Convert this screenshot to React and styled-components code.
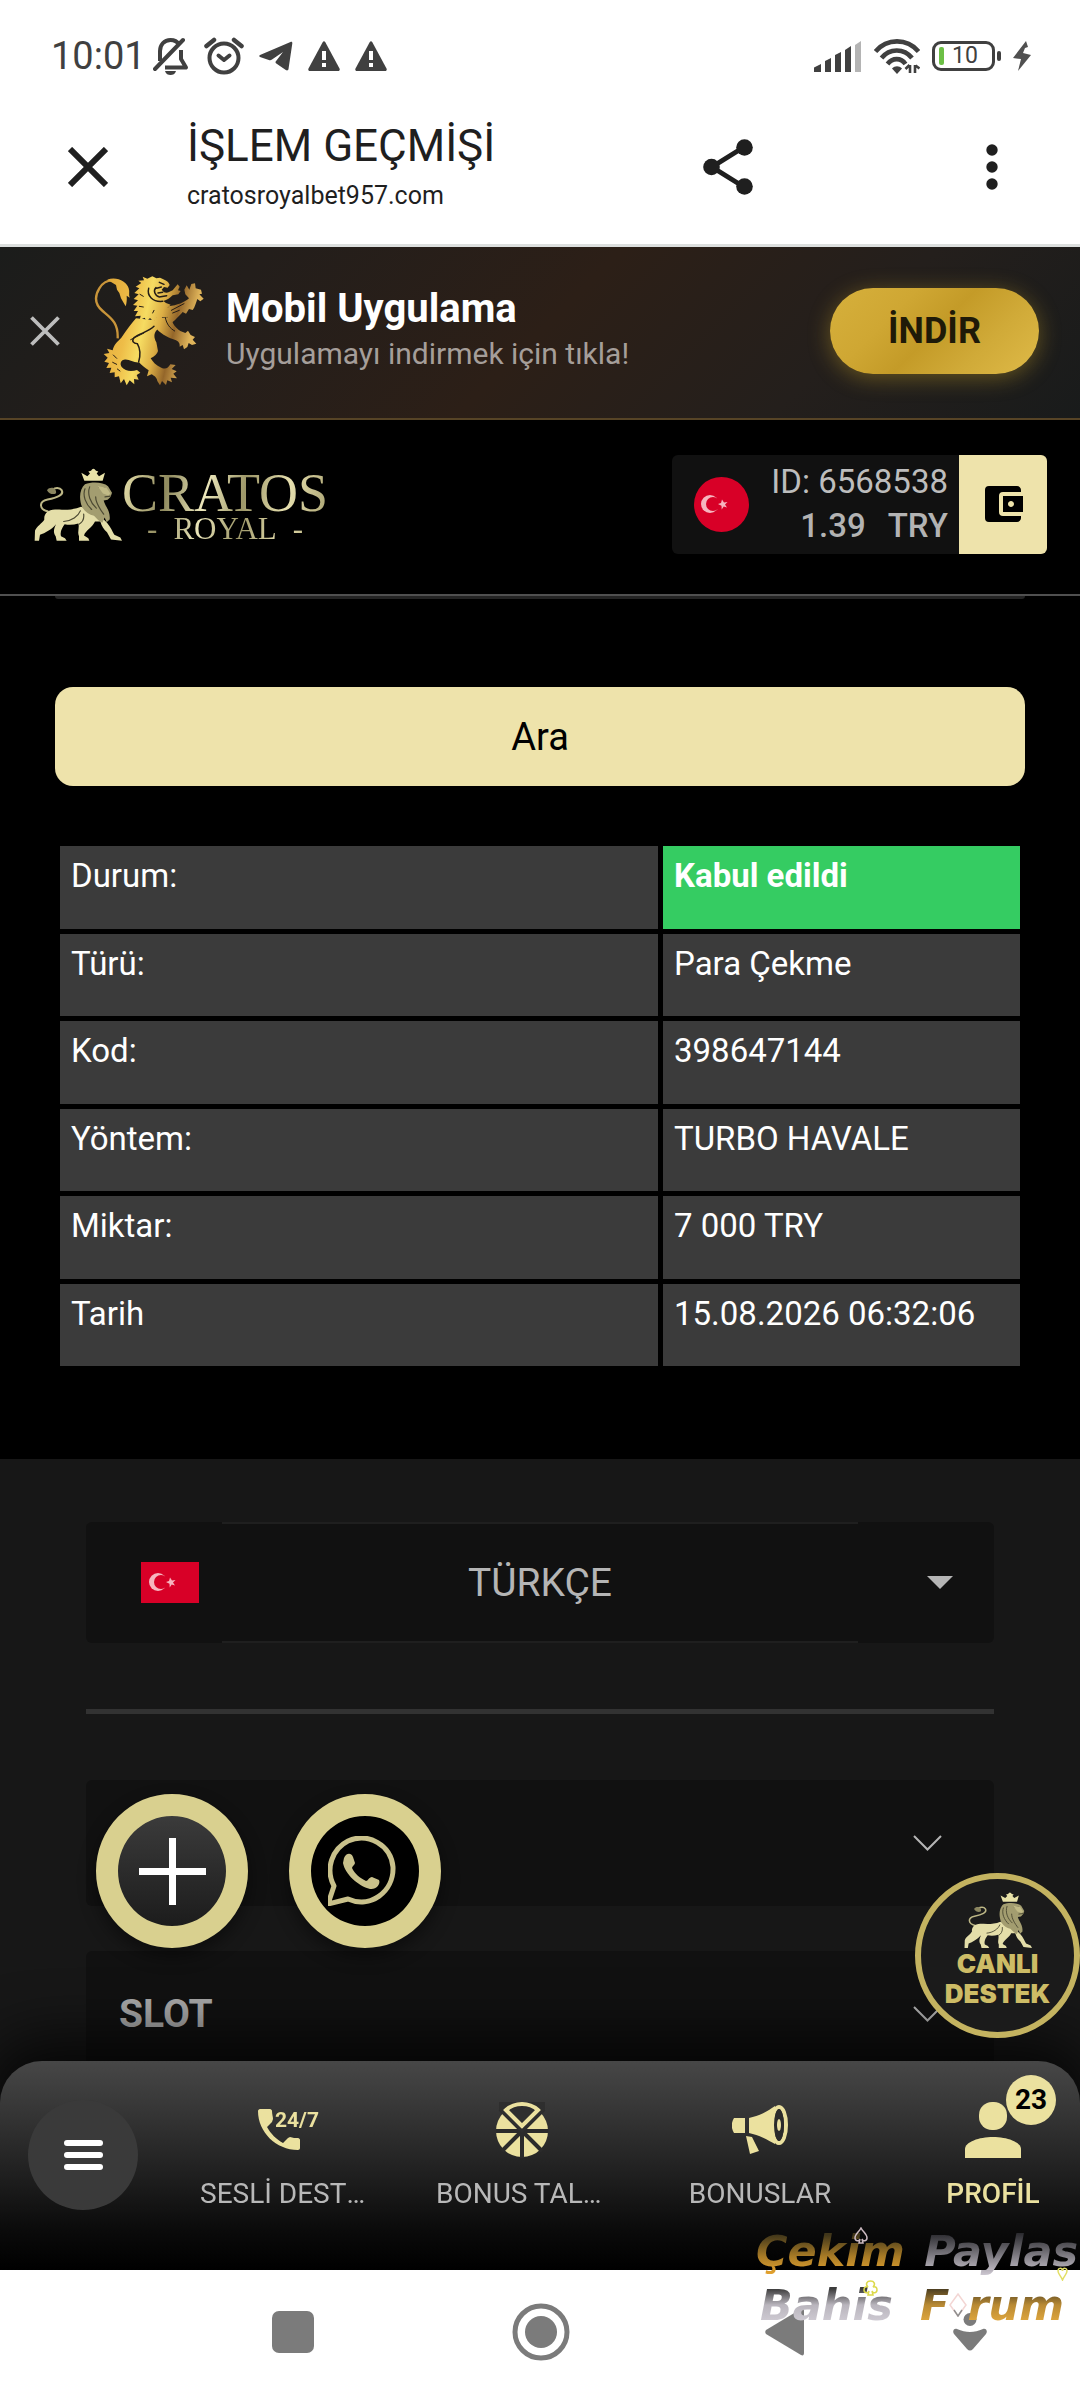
import React from "react";
import styled, { createGlobalStyle } from "styled-components";
import { MdAccountBalanceWallet } from "react-icons/md";

const GlobalStyle = createGlobalStyle`
  *, *::before, *::after { box-sizing: border-box; }
  body { margin: 0; background: #171717; font-family: Roboto, "Noto Sans", sans-serif; }
  button, select { font-family: inherit; margin: 0; padding: 0; border: 0; background: none; color: inherit; cursor: pointer; }
  svg { display: block; flex: none; }
`;

const Page = styled.div`
  display: flex;
  flex-direction: column;
  min-height: 100vh;
  background: #000;
`;

/* ---------- phone status bar ---------- */
const StatusBar = styled.div`
  display: flex;
  justify-content: space-between;
  align-items: center;
  height: 112px;
  padding: 0 49px 0 51px;
  background: #fff;
  color: #404040;
`;
const StatusGroup = styled.div`
  display: flex;
  align-items: center;
  gap: ${(p) => p.$gap}px;
`;
const Clock = styled.time`
  font-size: 38px;
  line-height: 44px;
  margin-right: -8px;
`;
const Battery = styled.div`
  display: flex;
  align-items: center;
  gap: 2px;
`;
const BatteryShell = styled.div`
  display: flex;
  align-items: center;
  gap: 8px;
  width: 63px;
  height: 30px;
  padding-left: 4px;
  border: 3px solid #404040;
  border-radius: 9px;
  font-size: 23px;
  line-height: 24px;
`;
const BatteryCharge = styled.span`
  width: 5px;
  height: 18px;
  border-radius: 2px;
  background: #6cbf45;
`;
const BatteryTip = styled.span`
  width: 4px;
  height: 10px;
  border-radius: 2px;
  background: #404040;
`;

/* ---------- browser toolbar ---------- */
const BrowserBar = styled.div`
  display: flex;
  align-items: center;
  height: 135px;
  padding: 0 60px 22px;
  background: #fff;
  border-bottom: 3px solid #dcdfde;
  color: #1f1f1f;
`;
const IconButton = styled.button`
  display: grid;
  place-items: center;
  width: ${(p) => p.$w || 56}px;
  height: 60px;
  flex: none;
`;
const SiteInfo = styled.div`
  flex: 1;
  padding: 4px 0 0 71px;
`;
const SiteTitle = styled.div`
  font-size: 44px;
  line-height: 54px;
`;
const SiteHost = styled.div`
  font-size: 25px;
  line-height: 46px;
`;
const Actions = styled.div`
  display: flex;
  align-items: center;
  gap: 208px;
`;

/* ---------- app banner ---------- */
const Banner = styled.aside`
  display: flex;
  align-items: center;
  height: 173px;
  padding: 0 41px 4px 15px;
  border-bottom: 2px solid #574426;
  background: linear-gradient(135deg, #1b1c1b 0%, #231e1b 22%, #2c1f17 50%, #241f1c 75%, #191b1b 100%);
`;
const BannerLogo = styled.div`
  padding: 0 22px 0 19px;
`;
const BannerText = styled.div`
  flex: 1;
`;
const BannerTitle = styled.div`
  font-size: 40px;
  font-weight: 700;
  line-height: 46px;
  color: #fff;
`;
const BannerSub = styled.div`
  font-size: 30px;
  line-height: 44px;
  color: #a59e9a;
`;
const DownloadButton = styled.button`
  width: 209px;
  height: 86px;
  border-radius: 43px;
  background: linear-gradient(135deg, #d6b03c 0%, #cfa733 30%, #c49b28 50%, #d0aa38 72%, #dfba48 100%);
  box-shadow: 0 4px 22px rgba(201, 162, 39, 0.42);
  color: #1f1a08;
  font-size: 36px;
  font-weight: 700;
`;

/* ---------- site header ---------- */
const Header = styled.header`
  display: flex;
  align-items: center;
  justify-content: space-between;
  height: 176px;
  padding: 0 33px 6px 34px;
  border-bottom: 2px solid #505050;
  background: #000;
`;
const Logo = styled.a`
  display: flex;
  align-items: center;
  text-decoration: none;
`;
const LogoWords = styled.span`
  display: flex;
  flex-direction: column;
  align-items: center;
  padding-top: 8px;
  font-family: "Liberation Serif", serif;
  background: linear-gradient(100deg, #e9e2ac, #8f8a5e 22%, #ece7bb 40%, #9d9768 58%, #e6dfae 78%, #a59e6d);
  background-clip: text;
  -webkit-background-clip: text;
  color: transparent;
`;
const LogoMain = styled.span`
  font-size: 54px;
  line-height: 42px;
`;
const LogoSub = styled.span`
  display: flex;
  gap: 16px;
  font-size: 31px;
  line-height: 30px;
`;
const Account = styled.div`
  display: flex;
  height: 99px;
  border-radius: 6px;
  overflow: hidden;
  background: #111;
`;
const AccountInfo = styled.div`
  display: flex;
  align-items: center;
  gap: 22px;
  padding: 0 11px 0 22px;
`;
const AccountText = styled.div`
  display: flex;
  flex-direction: column;
  align-items: flex-end;
  font-size: 33px;
  line-height: 44px;
  color: #bdbdbd;
`;
const Balance = styled.div`
  display: flex;
  gap: 22px;
  font-weight: 500;
  color: #b3b3b3;
`;
const WalletButton = styled.button`
  display: grid;
  place-items: center;
  width: 88px;
  background: #eee3ab;
  color: #000;
`;

/* ---------- history ---------- */
const Main = styled.main`
  padding: 0 55px 88px;
  background: #000;
`;
const FieldEdge = styled.div`
  height: 3px;
  margin-bottom: 88px;
  border-radius: 0 0 6px 6px;
  background: #242424;
`;
const SearchButton = styled.button`
  display: block;
  width: 100%;
  height: 99px;
  border-radius: 18px;
  background: #eee3ab;
  color: #000;
  font-size: 38px;
`;
const Table = styled.table`
  width: 100%;
  height: 530px;
  margin-top: 55px;
  border-collapse: separate;
  border-spacing: 5px;
  table-layout: fixed;
  color: #fff;
  font-size: 33px;
  line-height: 38px;
`;
const LabelCell = styled.th`
  padding: 11px 11px 33px;
  background: #3b3b3b;
  font-weight: 400;
  text-align: left;
  vertical-align: top;
`;
const ValueCell = styled.td`
  width: 357px;
  padding: 11px;
  background: ${(p) => (p.$accepted ? "#35cc62" : "#3b3b3b")};
  font-weight: ${(p) => (p.$accepted ? 700 : 400)};
  vertical-align: top;
  white-space: nowrap;
`;

/* ---------- footer ---------- */
const Footer = styled.footer`
  flex: 1;
  padding: 63px 86px 320px;
  background: #171717;
`;
const LanguageBox = styled.label`
  display: flex;
  align-items: center;
  height: 121px;
  border-radius: 6px;
  background: #111;
  color: #b5b5b5;
`;
const LanguageEnd = styled.span`
  display: grid;
  place-items: center;
  width: ${(p) => p.$w}px;
  flex: none;
  padding-left: ${(p) => p.$pad || 0}px;
`;
const LanguageSelect = styled.select`
  flex: 1;
  height: 100%;
  border-top: 2px solid #1f1f1f;
  border-bottom: 2px solid #1f1f1f;
  appearance: none;
  font-size: 39px;
  text-align: center;
  text-align-last: center;
  color: #b5b5b5;
`;
const Divider = styled.hr`
  height: 5px;
  margin: 66px 0;
  border: 0;
  background: #323232;
`;
const Accordion = styled.button`
  display: flex;
  align-items: center;
  justify-content: space-between;
  width: 100%;
  height: 126px;
  margin-bottom: 45px;
  padding: 0 52px 0 33px;
  border-radius: 6px;
  background: #111;
  color: #aaa;
  font-size: 39px;
  font-weight: 700;
`;

/* ---------- floating controls ---------- */
const FloatingRow = styled.div`
  position: fixed;
  left: 96px;
  bottom: 452px;
  display: flex;
  gap: 41px;
`;
const RoundButton = styled.button`
  display: grid;
  place-items: center;
  width: 152px;
  height: 154px;
  border-radius: 50%;
  border: 22px solid #d9d08f;
  background: ${(p) => (p.$dark ? "#000" : "linear-gradient(#3b3b3b, #1c1c1c)")};
  box-shadow: 0 8px 18px rgba(0, 0, 0, 0.45);
`;
const SupportButton = styled.button`
  position: fixed;
  right: 0;
  bottom: 362px;
  display: flex;
  flex-direction: column;
  align-items: center;
  width: 165px;
  height: 165px;
  padding-top: 12px;
  border: 6px solid #c4b360;
  border-radius: 50%;
  background: #1b1b1b;
  color: #cdbc66;
  font-family: Inter, sans-serif;
  font-size: 26px;
  font-weight: 900;
  line-height: 30px;
`;

/* ---------- bottom bars ---------- */
const Dock = styled.div`
  position: fixed;
  left: 0;
  right: 0;
  bottom: 0;
`;
const TabBar = styled.nav`
  display: grid;
  grid-template-columns: 142px 288fr 184fr 292fr 174fr;
  height: 209px;
  border-radius: 42px 42px 0 0;
  background: linear-gradient(#474747 0%, #3a3a3a 18%, #1f1f1f 55%, #0b0b0b 80%, #000 100%);
  box-shadow: 0 -8px 60px 14px rgba(0, 0, 0, 0.75);
`;
const MenuButton = styled.button`
  display: grid;
  place-items: center;
  justify-self: end;
  width: 110px;
  height: 110px;
  margin: 39px 4px 0 0;
  border-radius: 50%;
  background: #3a3a3a;
`;
const Tab = styled.a`
  display: flex;
  flex-direction: column;
  align-items: center;
  min-width: 0;
  gap: 19px;
  padding-top: 41px;
  text-decoration: none;
  color: ${(p) => (p.$active ? "#ebe19f" : "#b8b8b8")};
  font-size: 28px;
  font-weight: ${(p) => (p.$active ? 500 : 400)};
  line-height: 34px;
`;
const TabIcon = styled.span`
  position: relative;
  display: block;
  color: #ebe19f;
`;
const TabLabel = styled.span`
  max-width: 172px;
  overflow: hidden;
  text-overflow: ellipsis;
  white-space: nowrap;
`;
const Count = styled.span`
  position: absolute;
  left: 41px;
  top: -27px;
  width: 50px;
  height: 50px;
  border-radius: 50%;
  background: #ebe19f;
  color: #000;
  font-size: 28px;
  font-weight: 700;
  line-height: 50px;
  text-align: center;
`;
const PhoneText = styled.span`
  position: absolute;
  left: 17px;
  top: 6px;
  font-size: 21px;
  font-weight: 700;
  line-height: 24px;
`;
const SystemNav = styled.div`
  display: grid;
  grid-template-columns: 246fr 248fr 242fr 128fr;
  align-items: center;
  justify-items: center;
  height: 130px;
  padding: 0 46px 6px 170px;
  background: #fff;
`;
const Watermark = styled.div`
  position: absolute;
  right: 2px;
  bottom: 68px;
  pointer-events: none;
  font-family: "DejaVu Sans", sans-serif;
  font-size: 43px;
  font-style: italic;
  line-height: 54px;
`;
const WatermarkLine = styled.div`
  display: flex;
  justify-content: space-between;
  width: 322px;
  padding: ${(p) => (p.$inset ? "0 14px 0 4px" : "0")};
`;
const Ink = styled.span`
  display: inline-flex;
  align-items: center;
  background: ${(p) => p.$fill};
  background-clip: text;
  -webkit-background-clip: text;
  color: transparent;
  font-weight: 700;
`;
const Suit = styled.span`
  position: absolute;
  left: ${(p) => p.$x}px;
  top: ${(p) => p.$y}px;
`;

/* ---------- drawings ---------- */
const BellOff = () => (
  <svg width="36" height="38" viewBox="0 0 36 38" fill="none" stroke="currentColor" strokeWidth="4" strokeLinejoin="round">
    <path d="M7 24V14c0-6 4-11 10.500-11 4 0 7 2 8.500 4.500M28 13v9l5 8.500H12" />
    <path d="M2 32 30 3" strokeLinecap="round" />
    <path d="M12 34h11c-1 3-3 4-5.500 4S13 37 12 34z" fill="currentColor" stroke="none" />
  </svg>
);
const Alarm = () => (
  <svg width="40" height="38" viewBox="0 0 40 38" fill="none" stroke="currentColor" strokeWidth="4" strokeLinecap="round" strokeLinejoin="round">
    <circle cx="20" cy="21" r="14.500" />
    <path d="M14.500 18.500 20 23l5.500-4.500" />
    <path d="M2.500 9 10 3M37.500 9 30 3" strokeWidth="4.500" />
  </svg>
);
const Plane = () => (
  <svg width="34" height="30" viewBox="0 0 34 30" fill="currentColor">
    <path d="M1 14 31.500 1c1.300-.5 2 .2 1.800 1.500L29.500 28c-.3 1.500-1.500 1.800-2.700 1l-9.500-6.500c-1-.8-1-1.700-.2-2.500L24 11l-11 7.500c-1 .7-2 .8-3.200.4L1 16c-1-.4-1-1.500 0-2z" />
  </svg>
);
const Warn = () => (
  <svg width="32" height="30" viewBox="0 0 32 30">
    <path d="M14.800 1c.6-1 1.800-1 2.400 0l14.300 26.500c.6 1.200.1 2.500-1.300 2.500H1.800C.4 30-.1 28.700.5 27.500z" fill="#404040" />
    <path d="M14 10h4v9h-4zM14 22h4v4h-4z" fill="#fff" />
  </svg>
);
const Signal = () => (
  <svg width="48" height="31" viewBox="0 0 48 31" fill="#404040">
    <path d="M0 31v-4.500L7 23v8zM11 31V20l6-3v14zM21 31V14l6-3v20zM31 31V9l6-4v26z" />
    <path d="M41 31V4l6-4v31z" fill="#b4b4b4" />
  </svg>
);
const Wifi = () => (
  <svg width="46" height="35" viewBox="0 0 46 35" fill="none" stroke="#404040" strokeWidth="4.600">
    <path d="M1.500 12.500C13-1 33-1 44.500 12.500M7.500 19C15.500 9 30 9 38 19M13.500 25c5-6.500 13.500-6.500 18 0" />
    <path d="M18 29.500c3-3 7-3 10 0L23 35z" fill="#404040" stroke="none" />
    <path d="M36 26v8M41 26v8M31.500 30l4-4M45.500 29.500l-4-3" strokeWidth="2.600" />
  </svg>
);
const Bolt = () => (
  <svg width="18" height="30" viewBox="0 0 18 30" fill="#505050">
    <path d="M13 0 0 17l8 1-3 12 13-16-8-2 2-5 3-1z" />
  </svg>
);
const Cross = ({ size, stroke, color }) => (
  <svg width={size} height={size} viewBox="0 0 40 40" stroke={color} strokeWidth={stroke}>
    <path d="M2 2 38 38M38 2 2 38" />
  </svg>
);
const Share = () => (
  <svg width="50" height="56" viewBox="0 0 50 56" fill="currentColor">
    <path d="M41 8 9 28l32 20" fill="none" stroke="currentColor" strokeWidth="5" />
    <circle cx="41.500" cy="8.500" r="8.300" />
    <circle cx="8.500" cy="28" r="8.300" />
    <circle cx="41.500" cy="47.500" r="8.300" />
  </svg>
);
const Dots = () => (
  <svg width="12" height="46" viewBox="0 0 12 46" fill="currentColor">
    <circle cx="6" cy="6" r="5.700" />
    <circle cx="6" cy="23" r="5.700" />
    <circle cx="6" cy="40" r="5.700" />
  </svg>
);
const RampantLion = () => (
  <svg width="110" height="112" viewBox="26 24 330 332">
    <defs>
      <linearGradient id="gold" gradientUnits="userSpaceOnUse" x1="40" y1="120" x2="350" y2="190">
        <stop offset="0" stopColor="#dfa637" />
        <stop offset="0.300" stopColor="#eebd48" />
        <stop offset="0.450" stopColor="#f6dc62" />
        <stop offset="0.600" stopColor="#dcae45" />
        <stop offset="0.740" stopColor="#94662a" />
        <stop offset="0.900" stopColor="#dfb45a" />
      </linearGradient>
    </defs>
    <path d="M97 212C99 165 78 152 52 130C28 110 28 85 42 62C54 42 74 35 95 40" fill="none" stroke="#c9953a" strokeWidth="7" />
    <g fill="url(#gold)">
      <path d="M66 36C92 24 126 42 130 62C134 72 129 80 133 90L124 84C125 96 124 106 121 116L113 102L107 92L102 76L95 66L92 52Z" />
      <path d="M172 27L186 33L201 26L213 32L224 30C238 36 250 40 253 52L247 60L236 58L229 66L236 74C246 78 254 72 262 68L277 50L283 57L278 68L286 70L279 80L262 83C255 90 245 98 234 100L242 106L256 111L247 120L256 131L243 136L247 150L231 148L224 160L213 150L205 162L194 151L184 161L178 150L163 157L166 144L149 146L158 130L145 130L156 114L143 112L158 98L145 94L160 80L147 76L162 62L151 57L168 46L159 39L176 38Z" />
      <path d="M250 116C275 113 298 104 311 92L300 80L297 66L304 53L312 66L318 49L329 47L331 62L347 66L350 78L342 80L355 93L345 101L336 94C331 108 329 118 322 127L311 124L302 138L292 133C280 146 268 160 258 165L240 140Z" />
      <path d="M205 150L258 150C260 166 270 180 285 190L300 196L308 189L316 202L329 208L322 216L333 228L320 232L310 226L306 238L296 245L292 232L283 237C284 226 280 220 268 216C252 212 232 202 214 184Z" />
      <path d="M152 152C140 165 125 185 108 210C96 222 85 232 82 248L65 243L72 256L55 259L67 270L57 282L71 286L63 301L78 300L73 316L88 314L88 329L101 326L106 347L116 334L124 353L133 338L147 350L146 334L160 336L154 322L165 315L155 307C140 312 120 312 109 298C103 288 106 278 116 276C130 272 145 286 161 284C168 292 178 300 190 308L185 326L199 320C206 324 215 330 216 340L224 353L230 340L242 352L246 338L260 344L256 330L275 332L264 318L274 311L259 304L271 292L255 290C248 302 240 306 228 300C212 294 202 282 196 272C208 266 216 258 218 250L213 224C206 210 204 198 215 186L228 160Z" />
    </g>
    <g fill="none" stroke="#241c16" strokeWidth="4.500" strokeLinecap="round">
      <path d="M206 176C192 192 160 198 146 210C138 220 144 228 156 228C163 240 166 262 160 282" />
      <path d="M212 60C203 68 208 84 222 88L244 84M190 62C184 84 202 104 232 101" />
      <path d="M222 44L236 50M214 62L228 58M218 76L232 74" />
      <path d="M240 150C244 170 254 182 268 190M258 128L296 108M262 136L282 128M136 216L176 196M84 262L94 272M82 284L94 290M96 304L104 310M164 80L174 86M162 116L174 118M202 136L206 128" strokeWidth="3" />
    </g>
  </svg>
);
const CrownedLion = ({ width, height }) => (
  <svg width={width} height={height} viewBox="27 22 264 218">
    <path d="M70 152C42 146 40 122 68 116C96 111 118 102 110 88C104 79 90 80 84 86" fill="none" stroke="#bdb786" strokeWidth="6" />
    <path d="M66 88C75 75 96 80 93 97C85 103 72 99 66 88Z" fill="#8b8660" />
    <path d="M178 60L169 36L187 46L195 38L190 32L198 30Q205 18 213 30L220 32L215 38L222 46L240 36L233 60Z" fill="#e8e2a8" />
    <path d="M168 138C140 150 110 146 90 146C68 146 56 160 58 176C52 188 34 196 30 210L29 240L42 240L45 222C60 216 80 206 93 190C86 205 84 215 92 226L95 240L125 240L120 232L108 226C104 212 112 200 119 190C132 193 146 192 160 188C164 200 156 214 162 226L162 240L193 240L190 232L177 224C182 208 202 200 210 182L226 182C230 196 236 206 246 214L258 236L291 240L286 230L268 222C262 212 258 200 246 186L210 150Z" fill="#e4dea9" />
    <path d="M180 70C200 62 235 63 249 76L261 96L257 108L248 117L236 119C240 136 257 150 254 176L245 184L239 170L232 186L220 178L207 165C188 160 170 146 167 125C162 100 168 80 180 70Z" fill="#a39d70" />
    <g fill="none" stroke="#4b4832" strokeWidth="3.500" strokeLinecap="round">
      <path d="M180 84C172 104 182 130 200 146M194 78C186 100 196 126 214 142M212 108C212 126 224 144 236 160M240 108L256 106" />
      <path d="M166 150C160 166 140 180 116 182M176 160C178 176 170 186 162 190M222 80L240 80" />
    </g>
    <path d="M218 76L244 80L256 98L250 104L234 98Z" fill="#c2bb87" />
  </svg>
);
const Crescent = () => (
  <>
    <circle cx="17" cy="20" r="9" fill="#f6b5bf" />
    <circle cx="20" cy="20" r="7" fill="#d80027" />
    <path d="M25 20l3-1 1-3.500 2 3 3.500-.5-2.500 2.500 2 3-3.300-1-2 3-.2-3.700z" fill="#f6b5bf" />
  </>
);
const RoundFlag = () => (
  <svg width="55" height="55" viewBox="0 0 55 55">
    <circle cx="27.500" cy="27.500" r="27.500" fill="#d80027" />
    <g transform="translate(-1 7)">
      <Crescent />
    </g>
  </svg>
);
const Flag = () => (
  <svg width="58" height="41" viewBox="0 0 58 41">
    <rect width="58" height="41" fill="#d80027" />
    <Crescent />
  </svg>
);
const Caret = () => (
  <svg width="26" height="13" viewBox="0 0 26 13" fill="#b5b5b5">
    <path d="M0 0h26L13 13z" />
  </svg>
);
const Chevron = () => (
  <svg width="29" height="16" viewBox="0 0 29 16" fill="none" stroke="#b5b5b5" strokeWidth="2">
    <path d="M1 1l13.500 13.500L28 1" />
  </svg>
);
const Plus = () => (
  <svg width="67" height="67" viewBox="0 0 67 67" stroke="#fff" strokeWidth="7">
    <path d="M0 33.500h67M33.500 0v67" />
  </svg>
);
const WhatsApp = () => (
  <svg width="74" height="70" viewBox="2 0 74 70">
    <path d="M2 68 8 50C-1 33 6 13 22 5c20-9 43 4 45 26 1 25-23 42-45 32z" fill="none" stroke="#c9c18b" strokeWidth="5" strokeLinejoin="round" />
    <path d="M18 22c2-5 7-6 9-1l2 6c0 2-3 3-3 5 3 6 8 10 14 13 2 0 3-4 6-4l7 3c2 4-3 10-9 9C32 50 19 38 17 27z" fill="#c9c18b" />
  </svg>
);
const Hamburger = () => (
  <svg width="39" height="31" viewBox="0 0 39 31" fill="#fff">
    <rect width="39" height="6" rx="3" />
    <rect y="12" width="39" height="6" rx="3" />
    <rect y="24" width="39" height="6" rx="3" />
  </svg>
);
const Phone = () => (
  <svg width="56" height="56" viewBox="0 0 56 56" fill="currentColor">
    <path d="M2 7h10c1 0 2 1 2 2 0 3 1 6 1 8l-1 3-5 5c4 7 9 12 16 16l5-5 2-1c3 1 5 1 8 1 1 0 2 1 2 2v8c0 1-1 2-2 2C18 48 0 30 0 9c0-1 1-2 2-2z" />
  </svg>
);
const Wheel = () => (
  <svg width="52" height="56" viewBox="0 0 52 56">
    <circle cx="26" cy="29" r="26" fill="#ebe19f" />
    <path d="M26 29V56M0 29H52M26 29 6 49M26 29 46 49M26 29 4 7M26 29 48 7" stroke="#2b2b2b" strokeWidth="4" />
    <path d="M26 31 3 8 3 0H49V8Z" fill="#2e2e2e" />
    <path d="M26 24 10 8C19 0 33 0 42 8Z" fill="none" stroke="#ebe19f" strokeWidth="4" />
  </svg>
);
const Megaphone = () => (
  <svg width="56" height="56" viewBox="0 0 56 56" fill="currentColor">
    <path d="M2 16h11v15H2c-3-5-3-10 0-15zM17 16C27 14 36 9 43 4v38c-7-4-16-9-26-11zM14 34l6 1 7 14-9 3z" />
    <ellipse cx="47" cy="23" rx="7" ry="18" fill="none" stroke="currentColor" strokeWidth="4" />
    <ellipse cx="47" cy="23" rx="5" ry="16" fill="#2b2b2b" />
    <ellipse cx="47" cy="23" rx="2" ry="6" />
  </svg>
);
const Person = () => (
  <svg width="56" height="56" viewBox="0 0 56 56" fill="currentColor">
    <rect x="14" y="0" width="28" height="28" rx="13" />
    <path d="M0 56V47c0-7 14-12 28-12s28 5 28 12v9z" />
  </svg>
);
const RecentsIcon = () => (
  <svg width="42" height="42" viewBox="0 0 42 42">
    <rect width="42" height="42" rx="7" fill="#7b7b7b" />
  </svg>
);
const HomeIcon = () => (
  <svg width="58" height="58" viewBox="0 0 58 58">
    <circle cx="29" cy="29" r="26" fill="none" stroke="#7b7b7b" strokeWidth="5" />
    <circle cx="29" cy="29" r="16" fill="#7b7b7b" />
  </svg>
);
const BackIcon = () => (
  <svg width="40" height="48" viewBox="0 0 40 48" fill="#7b7b7b">
    <path d="M1 22 36 1c2-1 3 0 3 2v42c0 2-1 3-3 2L1 26c-1-1-1-3 0-4z" />
  </svg>
);
const AssistIcon = () => (
  <svg width="34" height="38" viewBox="0 0 34 38" fill="#7b7b7b">
    <circle cx="17" cy="6.500" r="6.500" />
    <path d="M4 16c9 4 17 4 26 0 3-1 5 2 3 5L20 36c-2 2-4 2-6 0L1 21c-2-3 0-6 3-5z" />
  </svg>
);
const Diamond = () => (
  <svg width="18" height="24" viewBox="0 0 18 24" fill="none" stroke="#f3d6d4" strokeWidth="1.500">
    <path d="M9 1 17 12 9 23 1 12z" />
    <path d="M5 17 9 23 13 17" stroke="#8f8f8f" />
  </svg>
);
const Spade = () => (
  <svg width="14" height="17" viewBox="0 0 14 17" fill="none" stroke="#cbb9c0" strokeWidth="1.500">
    <path d="M7 1C5 5 1 7 1 11c0 3 4 4 5 1L5 16h4l-1-4c1 3 5 2 5-1 0-4-4-6-6-10z" />
  </svg>
);
const Club = () => (
  <svg width="15" height="16" viewBox="0 0 15 16" fill="none" stroke="#dcd94a" strokeWidth="1.500">
    <path d="M5 7C2 4 4 1 7.500 1S13 4 10 7c3-1 4 1 4 3 0 3-4 4-5 1l1 4H5l1-4c-1 3-5 2-5-1 0-2 1-4 4-3z" />
  </svg>
);
const Heart = () => (
  <svg width="11" height="14" viewBox="0 0 11 14" fill="none" stroke="#e2df66" strokeWidth="1.500">
    <path d="M5.500 13C4 9 1 7 1 4c0-3 4-4 4.500 0C6 0 10 1 10 4c0 3-3 5-4.500 9z" />
  </svg>
);

const rows = [
  ["Durum:", "Kabul edildi"],
  ["Türü:", "Para Çekme"],
  ["Kod:", "398647144"],
  ["Yöntem:", "TURBO HAVALE"],
  ["Miktar:", "7 000 TRY"],
  ["Tarih", "15.08.2026 06:32:06"],
];

export default function App() {
  return (
    <Page>
      <GlobalStyle />
      <StatusBar>
        <StatusGroup $gap={15}>
          <Clock>10:01</Clock>
          <BellOff />
          <Alarm />
          <Plane />
          <Warn />
          <Warn />
        </StatusGroup>
        <StatusGroup $gap={12}>
          <Signal />
          <Wifi />
          <Battery>
            <BatteryShell>
              <BatteryCharge />
              10
            </BatteryShell>
            <BatteryTip />
          </Battery>
          <Bolt />
        </StatusGroup>
      </StatusBar>

      <BrowserBar>
        <IconButton aria-label="Kapat">
          <Cross size={40} stroke={6} color="#1f1f1f" />
        </IconButton>
        <SiteInfo>
          <SiteTitle>İŞLEM GEÇMİŞİ</SiteTitle>
          <SiteHost>cratosroyalbet957.com</SiteHost>
        </SiteInfo>
        <Actions>
          <IconButton aria-label="Paylaş">
            <Share />
          </IconButton>
          <IconButton aria-label="Diğer">
            <Dots />
          </IconButton>
        </Actions>
      </BrowserBar>

      <Banner>
        <IconButton $w={60} aria-label="Kapat">
          <Cross size={30} stroke={5} color="#bdbdbd" />
        </IconButton>
        <BannerLogo>
          <RampantLion />
        </BannerLogo>
        <BannerText>
          <BannerTitle>Mobil Uygulama</BannerTitle>
          <BannerSub>Uygulamayı indirmek için tıkla!</BannerSub>
        </BannerText>
        <DownloadButton>İNDİR</DownloadButton>
      </Banner>

      <Header>
        <Logo href="#">
          <CrownedLion width={88} height={73} />
          <LogoWords>
            <LogoMain>CRATOS</LogoMain>
            <LogoSub>
              <span>-</span>
              <span>ROYAL</span>
              <span>-</span>
            </LogoSub>
          </LogoWords>
        </Logo>
        <Account>
          <AccountInfo>
            <RoundFlag />
            <AccountText>
              <div>ID: 6568538</div>
              <Balance>
                <span>1.39</span>
                <span>TRY</span>
              </Balance>
            </AccountText>
          </AccountInfo>
          <WalletButton aria-label="Cüzdan">
            <MdAccountBalanceWallet size={48} />
          </WalletButton>
        </Account>
      </Header>

      <Main>
        <FieldEdge />
        <SearchButton>Ara</SearchButton>
        <Table>
          <tbody>
            {rows.map(([label, value], i) => (
              <tr key={label}>
                <LabelCell scope="row">{label}</LabelCell>
                <ValueCell $accepted={i === 0}>{value}</ValueCell>
              </tr>
            ))}
          </tbody>
        </Table>
      </Main>

      <Footer>
        <LanguageBox>
          <LanguageEnd $w={136} $pad={32}>
            <Flag />
          </LanguageEnd>
          <LanguageSelect aria-label="Dil" defaultValue="tr">
            <option value="tr">TÜRKÇE</option>
          </LanguageSelect>
          <LanguageEnd $w={136} $pad={28}>
            <Caret />
          </LanguageEnd>
        </LanguageBox>
        <Divider />
        <Accordion aria-label="Menü">
          <span />
          <Chevron />
        </Accordion>
        <Accordion>
          SLOT
          <Chevron />
        </Accordion>
      </Footer>

      <FloatingRow>
        <RoundButton aria-label="Ekle">
          <Plus />
        </RoundButton>
        <RoundButton $dark aria-label="WhatsApp">
          <WhatsApp />
        </RoundButton>
      </FloatingRow>
      <Dock>
        <TabBar>
          <MenuButton aria-label="Menü">
            <Hamburger />
          </MenuButton>
          <Tab href="#">
            <TabIcon>
              <Phone />
              <PhoneText>24/7</PhoneText>
            </TabIcon>
            <TabLabel>SESLİ DESTEK</TabLabel>
          </Tab>
          <Tab href="#">
            <TabIcon>
              <Wheel />
            </TabIcon>
            <TabLabel>BONUS TALEP</TabLabel>
          </Tab>
          <Tab href="#">
            <TabIcon>
              <Megaphone />
            </TabIcon>
            <TabLabel>BONUSLAR</TabLabel>
          </Tab>
          <Tab href="#" $active>
            <TabIcon>
              <Person />
              <Count>23</Count>
            </TabIcon>
            <TabLabel>PROFİL</TabLabel>
          </Tab>
        </TabBar>
        <SystemNav>
          <IconButton aria-label="Son uygulamalar">
            <RecentsIcon />
          </IconButton>
          <IconButton aria-label="Ana ekran">
            <HomeIcon />
          </IconButton>
          <IconButton aria-label="Geri">
            <BackIcon />
          </IconButton>
          <IconButton aria-label="Erişilebilirlik">
            <AssistIcon />
          </IconButton>
        </SystemNav>
        <Watermark>
          <WatermarkLine>
            <Ink $fill="linear-gradient(#40361a 20%, #a87b26 60%, #f2ac32)">Çekim</Ink>
            <Ink $fill="linear-gradient(#1c1c20 10%, #6c6a70 50%, #d8d2dc)">Paylas</Ink>
          </WatermarkLine>
          <WatermarkLine $inset>
            <Ink $fill="linear-gradient(#3c3c3c 20%, #b9b5bd 50%, #dcd8e0)">Bahis</Ink>
            <Ink $fill="linear-gradient(#4a3d20 20%, #b98a34 50%, #f7b843)">
              F<Diamond />rum
            </Ink>
          </WatermarkLine>
          <Suit $x={98} $y={3}>
            <Spade />
          </Suit>
          <Suit $x={107} $y={56}>
            <Club />
          </Suit>
          <Suit $x={301} $y={43}>
            <Heart />
          </Suit>
        </Watermark>
      </Dock>
      <SupportButton>
        <CrownedLion width={68} height={58} />
        <span>CANLI</span>
        <span>DESTEK</span>
      </SupportButton>
    </Page>
  );
}
